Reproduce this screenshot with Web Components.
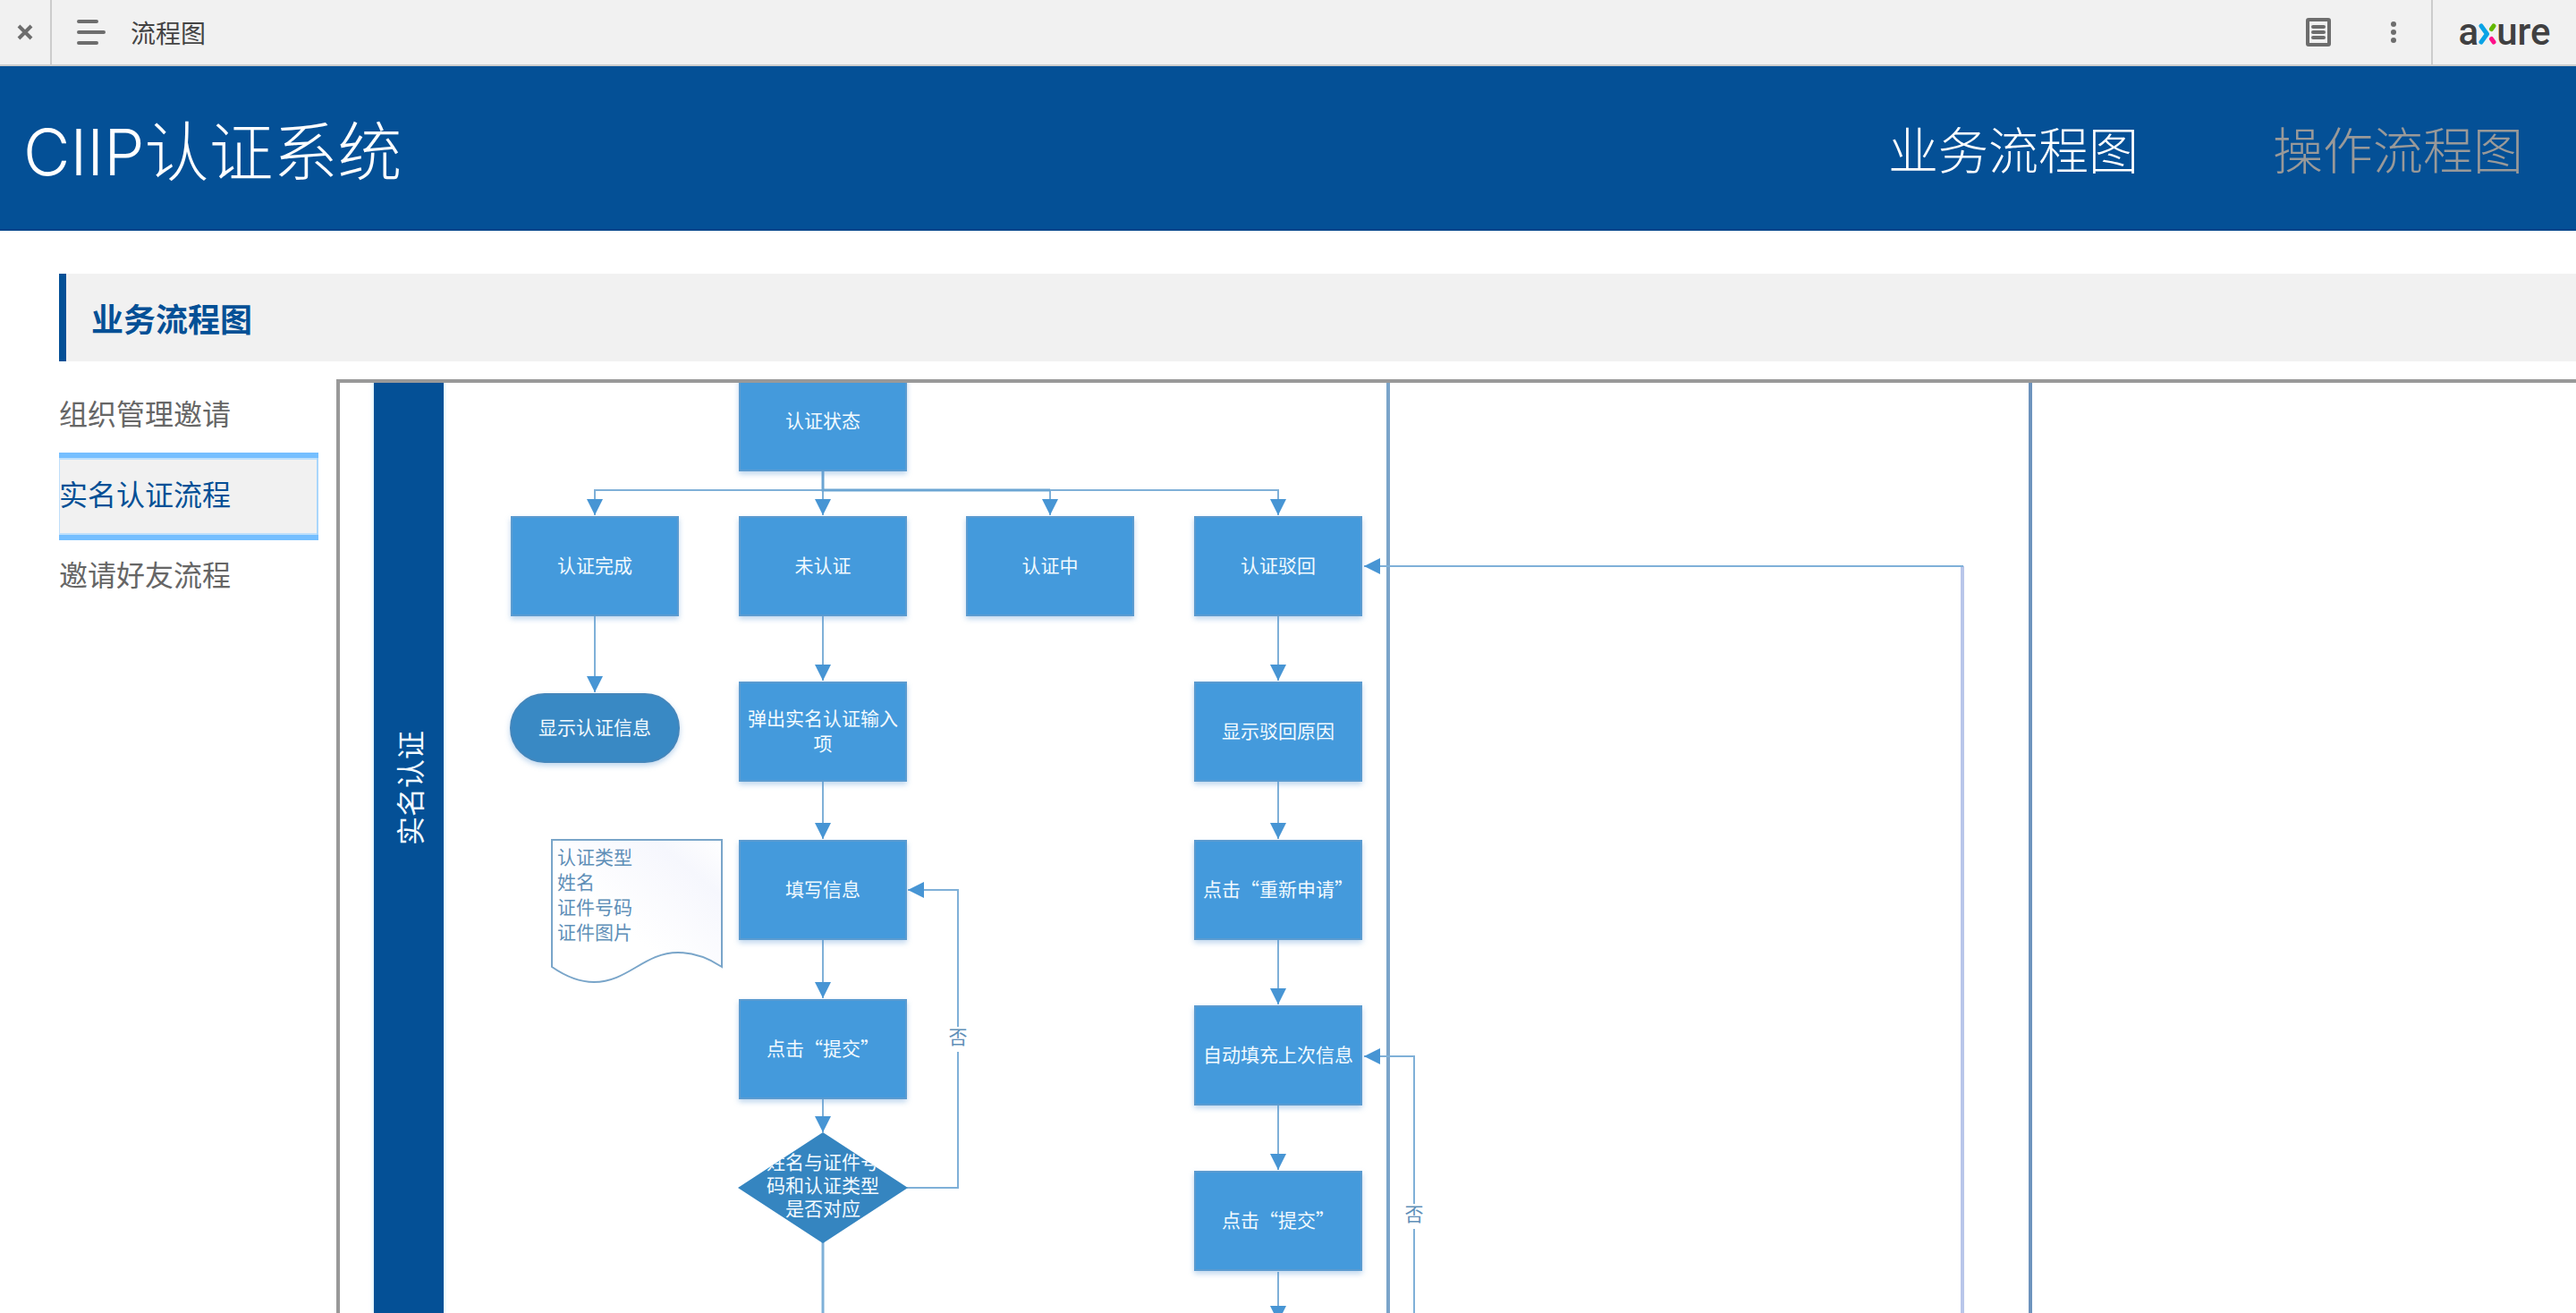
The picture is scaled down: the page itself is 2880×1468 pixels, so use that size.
<!DOCTYPE html>
<html lang="zh-CN">
<head>
<meta charset="utf-8">
<title>流程图</title>
<style>
  html, body { margin: 0; height: 100%; }
  body {
    overflow: hidden;
    background: #fff;
    font-family: "Noto Sans CJK SC", "Noto Sans", sans-serif;
    --brand: #045096;
    --panel: #f1f1f1;
  }
</style>
</head>
<body>
<proto-app></proto-app>

<template id="proto-app">
  <style>
    :host { display: flex; flex-direction: column; height: 100vh; overflow: hidden; }
    main { flex: 1; min-height: 0; display: flex; flex-direction: column; padding: 48px 0 0 66px; }
    .columns { flex: 1; min-height: 0; display: flex; gap: 20px; padding-top: 16px; }
    side-menu { flex: 0 0 290px; }
    flow-canvas { flex: 1; min-width: 0; margin-top: 4px; }
  </style>
  <player-bar page="流程图"></player-bar>
  <site-header name="CIIP认证系统">
    <a href="#business" aria-current="page">业务流程图</a>
    <a href="#operation">操作流程图</a>
  </site-header>
  <main>
    <section-title>业务流程图</section-title>
    <div class="columns">
      <side-menu>
        <a href="#invite">组织管理邀请</a>
        <a href="#realname" aria-current="page">实名认证流程</a>
        <a href="#friends">邀请好友流程</a>
      </side-menu>
      <flow-canvas></flow-canvas>
    </div>
  </main>
</template>

<template id="player-bar">
  <style>
    :host { display: flex; height: 72px; background: #f1f1f1; border-bottom: 2px solid #ccc; color: #444; }
    button { border: 0; padding: 0; background: none; display: flex; align-items: center; justify-content: center; cursor: pointer; }
    svg { display: block; }
    .close { width: 56px; border-right: 2px solid #ccc; box-sizing: content-box; }
    .pages { padding: 0 28px; gap: 28px; font: inherit; font-size: 28px; line-height: 40px; color: inherit; }
    .spacer { flex: 1; }
    .tool { width: 84px; }
    .logo { width: 160px; border-left: 2px solid #ccc; display: flex; align-items: center; justify-content: center; text-decoration: none; }
  </style>
  <button class="close" aria-label="关闭">
    <svg width="18" height="18" viewBox="0 0 18 18" stroke="#6d6d6d" stroke-width="4"><path d="M2 2L16 16M16 2L2 16"/></svg>
  </button>
  <button class="pages">
    <svg width="32" height="28" viewBox="0 0 32 28" stroke="#6d6d6d" stroke-width="4" stroke-linecap="round"><path d="M2 2H22M2 14H30M2 26H22"/></svg>
    <span id="page"></span>
  </button>
  <div class="spacer"></div>
  <button class="tool" aria-label="说明">
    <svg width="28" height="32" viewBox="0 0 28 32" fill="none" stroke="#6d6d6d" stroke-width="4"><rect x="2" y="2" width="24" height="28" rx="1"/><path stroke-linecap="round" d="M8 10H20M8 16H20M8 22H20"/></svg>
  </button>
  <button class="tool" aria-label="更多">
    <svg width="6" height="24" viewBox="0 0 6 24" fill="#6d6d6d"><circle cx="3" cy="3" r="3"/><circle cx="3" cy="12" r="3"/><circle cx="3" cy="21" r="3"/></svg>
  </button>
  <a class="logo" href="#axure" aria-label="axure"><axure-logo></axure-logo></a>
</template>

<template id="axure-logo">
  <style>
    :host { display: flex; align-items: baseline; font: 500 42px/48px Roboto, sans-serif; color: #404041; }
    svg { display: block; }
  </style>
  <span>a</span>
  <svg width="20" height="24" viewBox="0 0 20 24" fill="none" stroke-width="5" stroke-linejoin="round">
    <path stroke="#63b800" stroke-linecap="round" d="M14.500 6.500L17 3"/>
    <path stroke="#ff1089" stroke-linecap="round" d="M14.500 17.500L17 21"/>
    <path stroke="#0aa3e6" stroke-linecap="round" d="M3 3L9.500 12L3 21"/>
  </svg>
  <span>ure</span>
</template>

<template id="site-header">
  <style>
    :host { display: flex; align-items: center; justify-content: space-between; height: 182px; padding: 0 59px 0 26px; background: var(--brand); border-bottom: 2px solid #00438a; color: #fff; }
    h1 { margin: 0; padding-top: 10px; font: 300 72px/104px Inter, "Noto Sans CJK SC", sans-serif; }
    nav { display: flex; gap: 150px; }
    ::slotted(a) { color: #999; font-size: 56px; line-height: 80px; font-weight: 300; text-decoration: none; }
    ::slotted(a[aria-current]) { color: #fff; }
  </style>
  <h1></h1>
  <nav><slot></slot></nav>
</template>

<template id="section-title">
  <style>
    :host { display: block; background: var(--panel); border-left: 8px solid var(--brand); padding: 23px 28px; }
    h2 { margin: 0; font-size: 36px; line-height: 52px; font-weight: 700; color: var(--brand); }
  </style>
  <h2><slot></slot></h2>
</template>

<template id="side-menu">
  <style>
    :host { display: block; }
    nav { display: flex; flex-direction: column; }
    ::slotted(a) { box-sizing: border-box; height: 90px; padding: 17px 0; font-size: 32px; line-height: 48px; color: #666; text-decoration: none; white-space: nowrap; }
    ::slotted(a[aria-current]) {
      height: 98px; margin: -4px 0; padding: 15px 0;
      color: var(--brand); background: var(--panel);
      border: solid #75bfff; border-width: 6px 0;
      box-shadow: inset -2px 0 #a9d6fb, inset 1px 0 #c0dffa, inset 0 2px #bfe0fb, inset 0 -2px #bfe0fb;
    }
  </style>
  <nav><slot></slot></nav>
</template>

<template id="flow-node">
  <style>
    :host {
      position: absolute; box-sizing: border-box;
      width: 188px; height: 112px; padding-bottom: 4px;
      display: flex; align-items: center; justify-content: center; text-align: center;
      font-size: 21px; line-height: 28px; color: #f2faff;
      background: #449adc; border: 2px solid #5b9bd0;
      box-shadow: 0 3px 6px rgba(90, 150, 210, .4);
      white-space: pre-line;
    }
    :host([shape="end"]) { width: 190px; height: 78px; border-radius: 39px; background: #3989c4; border-color: #4486bb; }
    :host([shape="decision"]) { width: 190px; height: 124px; padding-bottom: 8px; line-height: 26px; background: #3585c0; border: 0; box-shadow: none; clip-path: polygon(50% 0, 100% 50%, 50% 100%, 0 50%); }
    :host([shape="note"]) { width: 190px; height: 162px; justify-content: flex-start; align-items: flex-start; text-align: left; padding: 4px 6px; background: none; border: 0; box-shadow: none; color: #5f8fb8; }
    :host([shape="label"]) { width: 28px; height: 28px; padding-bottom: 8px; background: #fff; border: 0; box-shadow: none; color: #5f8fb8; }
    :host([shape="lane"]) {
      width: 78px; height: 1174px; padding: 0; background: var(--brand); border: 0;
      box-shadow: 0 0 4px rgba(120, 200, 240, .6);
      writing-mode: vertical-rl; text-orientation: sideways; transform: rotate(180deg);
      font-size: 32px; line-height: 48px;
    }
  </style>
  <slot></slot>
</template>

<template id="flow-canvas">
  <style>
    :host { display: block; position: relative; overflow: hidden; border: solid #999; border-width: 4px 0 0 4px; background: #fff; }
    svg { position: absolute; top: 0; left: 0; width: 100%; height: 100%; overflow: visible; }
    svg path { fill: none; }
    .wire { stroke: #7fb0d8; stroke-width: 2; }
    .arrow { marker-end: url(#head); }
  </style>
  <svg aria-hidden="true">
    <defs>
      <marker id="head" markerUnits="userSpaceOnUse" markerWidth="18" markerHeight="18" refX="18" refY="9" orient="auto">
        <path d="M0 0L18 9L0 18Z" style="fill:#4795d4"/>
      </marker>
      <linearGradient id="paper" x1="0" y1="1" x2="1" y2="0">
        <stop offset=".4" stop-color="#fff"/><stop offset=".8" stop-color="#f6f7fd"/><stop offset="1" stop-color="#fff"/>
      </linearGradient>
    </defs>
    <path d="M1172 0V1200" stroke="#7ba5ca" stroke-width="4"/>
    <path d="M1890 0V1200" stroke="#6d93bd" stroke-width="4"/>
    <g class="wire">
      <path class="arrow" d="M540 99V120H285V148"/>
      <path class="arrow" d="M540 99V148"/>
      <path class="arrow" d="M540 120H1049V148"/>
      <path class="arrow" d="M540 120H794V148"/>
      <path d="M540 99V120H794" stroke="#6ba5d3" stroke-width="3"/>
      <path class="arrow" d="M285 261V346"/>
      <path class="arrow" d="M540 261V333"/>
      <path class="arrow" d="M540 446V510"/>
      <path class="arrow" d="M540 623V688"/>
      <path class="arrow" d="M540 800V838"/>
      <path d="M540 960V1200" stroke-width="3"/>
      <path class="arrow" d="M634 900H691V567H635"/>
      <path class="arrow" d="M1049 261V333"/>
      <path class="arrow" d="M1049 446V510"/>
      <path class="arrow" d="M1049 623V695"/>
      <path class="arrow" d="M1049 808V880"/>
      <path class="arrow" d="M1049 994V1050"/>
      <path class="arrow" d="M1201 1200V753H1145"/>
      <path d="M1814 205V1200" stroke="#b9c6ea" stroke-width="4"/>
      <path class="arrow" d="M1815 205H1145"/>
    </g>
    <path d="M237 511H427V653C410 642 394 637 378 637C340 637 322 670 284 670C266 670 250 662 237 653Z" style="fill:url(#paper)" stroke="#79a5c9" stroke-width="2"/>
  </svg>
  <flow-node shape="lane" x="38" y="-134">实名认证</flow-node>
  <flow-node x="446" y="-13">认证状态</flow-node>
  <flow-node x="191" y="149">认证完成</flow-node>
  <flow-node x="446" y="149">未认证</flow-node>
  <flow-node x="700" y="149">认证中</flow-node>
  <flow-node x="955" y="149">认证驳回</flow-node>
  <flow-node shape="end" x="190" y="347">显示认证信息</flow-node>
  <flow-node x="446" y="334">弹出实名认证输入
项</flow-node>
  <flow-node x="955" y="334">显示驳回原因</flow-node>
  <flow-node shape="note" x="237" y="511">认证类型
姓名
证件号码
证件图片</flow-node>
  <flow-node x="446" y="511">填写信息</flow-node>
  <flow-node x="955" y="511">点击“重新申请”</flow-node>
  <flow-node x="446" y="689">点击“提交”</flow-node>
  <flow-node x="955" y="696">自动填充上次信息</flow-node>
  <flow-node shape="decision" x="445" y="838">姓名与证件号
码和认证类型
是否对应</flow-node>
  <flow-node x="955" y="881">点击“提交”</flow-node>
  <flow-node shape="label" x="677" y="720">否</flow-node>
  <flow-node shape="label" x="1187" y="918">否</flow-node>
</template>

<script>
  class TemplateElement extends HTMLElement {
    constructor() {
      super();
      const template = document.getElementById(this.localName);
      this.attachShadow({ mode: "open" }).append(template.content.cloneNode(true));
    }
  }

  class PlayerBar extends TemplateElement {
    connectedCallback() {
      this.shadowRoot.getElementById("page").textContent = this.getAttribute("page");
    }
  }

  class SiteHeader extends TemplateElement {
    connectedCallback() {
      this.shadowRoot.querySelector("h1").textContent = this.getAttribute("name");
    }
  }

  // A node sits at its x / y attributes on the canvas.
  class FlowNode extends TemplateElement {
    connectedCallback() {
      this.style.left = this.getAttribute("x") + "px";
      this.style.top = this.getAttribute("y") + "px";
    }
  }

  customElements.define("axure-logo", class extends TemplateElement {});
  customElements.define("player-bar", PlayerBar);
  customElements.define("site-header", SiteHeader);
  customElements.define("section-title", class extends TemplateElement {});
  customElements.define("side-menu", class extends TemplateElement {});
  customElements.define("flow-node", FlowNode);
  customElements.define("flow-canvas", class extends TemplateElement {});
  customElements.define("proto-app", class extends TemplateElement {});
</script>
</body>
</html>
